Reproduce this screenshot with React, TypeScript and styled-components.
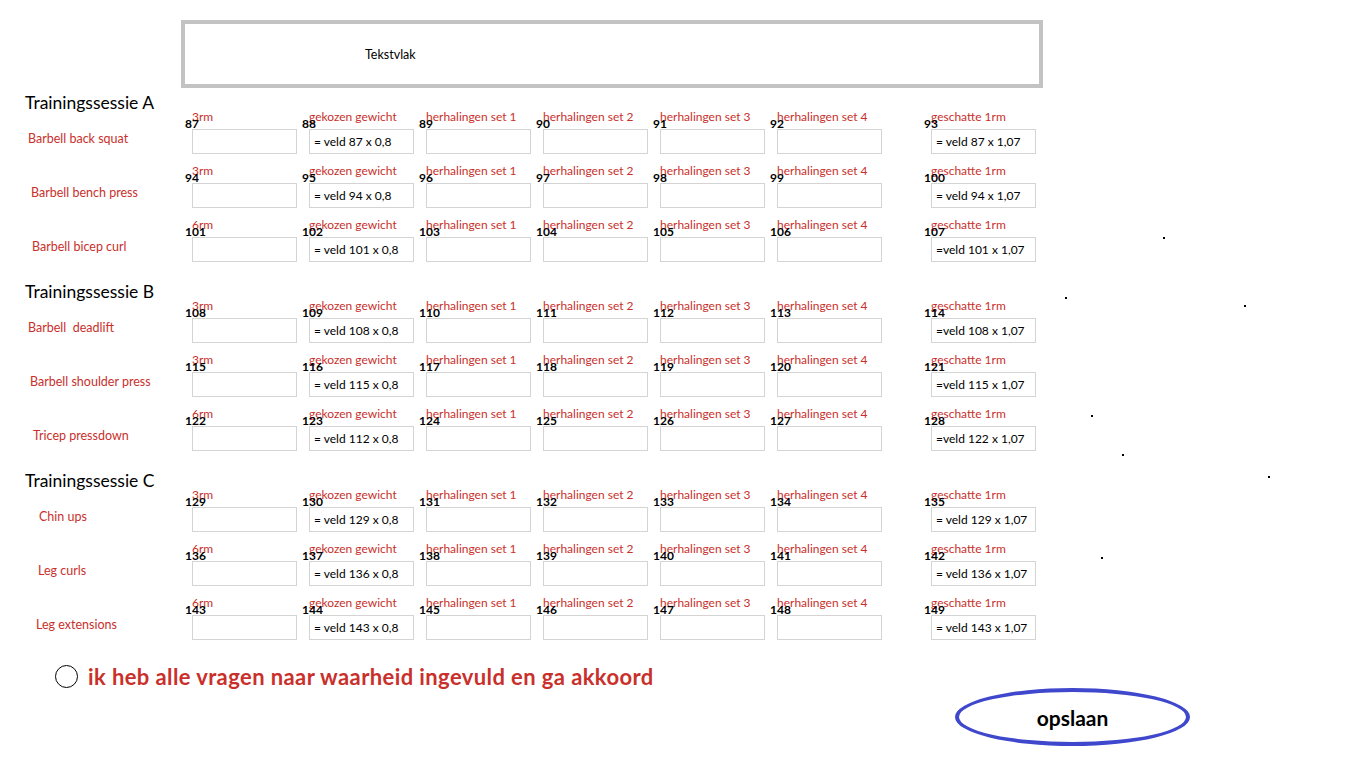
import React from "react";
import styled, { createGlobalStyle } from "styled-components";

const GlobalStyle = createGlobalStyle`
  html, body {
    margin: 0;
    padding: 0;
    background: #fff;
  }
  body {
    font-family: Lato, "Open Sans", "Liberation Sans", sans-serif;
    color: #000;
  }
`;

const RED = "#c9302c";

type Exercise = {
  name: string;
  indent: number;
  rm: string;
  chosen: string;
  estimate: string;
};

type Session = {
  title: string;
  exercises: Exercise[];
};

const sessions: Session[] = [
  {
    title: "Trainingssessie A",
    exercises: [
      { name: "Barbell back squat", indent: 3, rm: "3rm", chosen: "= veld 87 x 0,8", estimate: "= veld 87 x 1,07" },
      { name: "Barbell bench press", indent: 6, rm: "3rm", chosen: "= veld 94 x 0,8", estimate: "= veld 94 x 1,07" },
      { name: "Barbell bicep curl", indent: 7, rm: "6rm", chosen: "= veld 101 x 0,8", estimate: "=veld 101 x 1,07" },
    ],
  },
  {
    title: "Trainingssessie B",
    exercises: [
      { name: "Barbell  deadlift", indent: 3, rm: "3rm", chosen: "= veld 108 x 0,8", estimate: "=veld 108 x 1,07" },
      { name: "Barbell shoulder press", indent: 5, rm: "3rm", chosen: "= veld 115 x 0,8", estimate: "=veld 115 x 1,07" },
      { name: "Tricep pressdown", indent: 8, rm: "6rm", chosen: "= veld 112 x 0,8", estimate: "=veld 122 x 1,07" },
    ],
  },
  {
    title: "Trainingssessie C",
    exercises: [
      { name: "Chin ups", indent: 14, rm: "3rm", chosen: "= veld 129 x 0,8", estimate: "= veld 129 x 1,07" },
      { name: "Leg curls", indent: 13, rm: "6rm", chosen: "= veld 136 x 0,8", estimate: "= veld 136 x 1,07" },
      { name: "Leg extensions", indent: 11, rm: "6rm", chosen: "= veld 143 x 0,8", estimate: "= veld 143 x 1,07" },
    ],
  },
];

// losse pixels uit de schets
const strayDots: [number, number][] = [
  [1163, 237],
  [1065, 297],
  [1244, 305],
  [1091, 415],
  [1122, 454],
  [1268, 476],
  [1101, 557],
];

const Page = styled.div`
  position: relative;
  width: 1352px;
  min-height: 769px;
  padding: 20px 0 0 25px;
  box-sizing: border-box;
`;

const TextArea = styled.div`
  margin-left: 156px;
  width: 862px;
  height: 68px;
  border: 4px solid #c3c3c3;
  box-sizing: border-box;
  display: flex;
  align-items: center;
  padding-left: 180px;
  font-size: 12.5px;
`;

const SessionBlock = styled.section<{ $first?: boolean }>`
  display: flex;
  flex-direction: column;
  gap: 11px;
  margin-top: ${(p) => (p.$first ? "9px" : "24px")};
`;

const Row = styled.div`
  display: grid;
  grid-template-columns: 167px repeat(5, 117px) 154px 105px;
  align-items: end;
`;

const LabelCell = styled.div`
  display: flex;
  flex-direction: column;
  padding-bottom: 8px;
`;

const Heading = styled.h2`
  margin: -4px 0 19px;
  font-size: 17.5px;
  line-height: 20px;
  font-weight: 400;
`;

const ExerciseName = styled.div<{ $indent: number }>`
  padding-left: ${(p) => p.$indent}px;
  font-size: 12.5px;
  line-height: 14px;
  color: ${RED};
  white-space: pre;
`;

const Field = styled.div`
  display: flex;
  flex-direction: column;
  width: 105px;
`;

const Caption = styled.div`
  font-size: 12px;
  line-height: 12px;
  color: ${RED};
  white-space: nowrap;
`;

const Num = styled.div`
  margin: -5px 0 0 -7px;
  font-size: 12px;
  line-height: 12px;
  font-weight: 700;
`;

const Box = styled.div`
  margin-top: -1px;
  height: 25px;
  border: 1px solid #d4d4d4;
  box-sizing: border-box;
  display: flex;
  align-items: center;
  padding-left: 4px;
  font-size: 12px;
  white-space: nowrap;
`;

const Consent = styled.label`
  display: flex;
  align-items: center;
  gap: 10px;
  margin: 24px 0 0 30px;
  height: 24px;
`;

const Radio = styled.span`
  width: 23px;
  height: 23px;
  border: 1px solid #000;
  border-radius: 50%;
  box-sizing: border-box;
`;

const ConsentText = styled.span`
  font-size: 22px;
  font-weight: 700;
  color: ${RED};
  letter-spacing: 0.4px;
`;

const Actions = styled.div`
  display: flex;
  justify-content: flex-end;
  padding-right: 162px;
`;

const SaveButton = styled.button`
  width: 235px;
  height: 58px;
  border: 4px solid #3f48cc;
  border-radius: 50%;
  background: #fff;
  font-family: Lato, "Open Sans", sans-serif;
  font-size: 21px;
  font-weight: 700;
  color: #000;
  cursor: pointer;
`;

const Dot = styled.span`
  position: absolute;
  width: 2px;
  height: 2px;
  background: #000;
`;

const InputField = ({ caption, num, value }: { caption: string; num: number; value?: string }) => (
  <Field>
    <Caption>{caption}</Caption>
    <Num>{num}</Num>
    <Box>{value}</Box>
  </Field>
);

export default function App() {
  let counter = 87;
  return (
    <Page>
      <GlobalStyle />
      <TextArea>Tekstvlak</TextArea>
      {sessions.map((session, si) => (
        <SessionBlock key={session.title} $first={si === 0}>
          {session.exercises.map((ex, ei) => {
            const start = counter;
            counter += 7;
            return (
              <Row key={ex.name}>
                <LabelCell>
                  {ei === 0 && <Heading>{session.title}</Heading>}
                  <ExerciseName $indent={ex.indent}>{ex.name}</ExerciseName>
                </LabelCell>
                <InputField caption={ex.rm} num={start} />
                <InputField caption="gekozen gewicht" num={start + 1} value={ex.chosen} />
                <InputField caption="herhalingen set 1" num={start + 2} />
                <InputField caption="herhalingen set 2" num={start + 3} />
                <InputField caption="herhalingen set 3" num={start + 4} />
                <InputField caption="herhalingen set 4" num={start + 5} />
                <InputField caption="geschatte 1rm" num={start + 6} value={ex.estimate} />
              </Row>
            );
          })}
        </SessionBlock>
      ))}
      <Consent>
        <Radio />
        <ConsentText>ik heb alle vragen naar waarheid ingevuld en ga akkoord</ConsentText>
      </Consent>
      <Actions>
        <SaveButton>opslaan</SaveButton>
      </Actions>
      {strayDots.map(([x, y], i) => (
        <Dot key={i} style={{ left: x, top: y }} />
      ))}
    </Page>
  );
}
